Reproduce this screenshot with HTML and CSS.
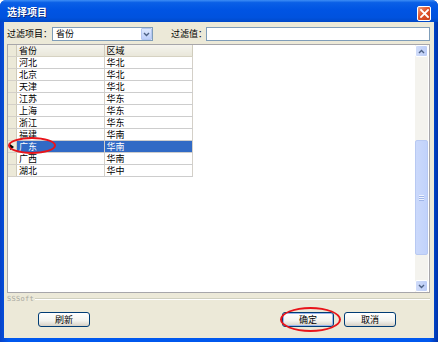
FILE: index.html
```html
<!DOCTYPE html>
<html lang="zh-CN">
<head>
  <meta charset="UTF-8" />
  <title>选择项目</title>
  <link rel="stylesheet" href="styles.css">
</head>
<body>
  <div class="window">
    <div class="titlebar">
      <span class="title">选择项目</span>
      <span class="close-btn">
        <svg width="9" height="9" viewBox="0 0 9 9"><path d="M1 1 L8 8 M8 1 L1 8" stroke="#fff" stroke-width="1.8" stroke-linecap="square"/></svg>
      </span>
    </div>

    <div class="client">
      <div class="filter-row">
        <label class="filter-label">过滤项目：</label>
        <div class="combo">
          <span class="combo-text">省份</span>
          <span class="combo-btn">
            <svg width="7" height="5" viewBox="0 0 7 5"><path d="M1 1 L3.5 3.5 L6 1" fill="none" stroke="#4d6185" stroke-width="1.4"/></svg>
          </span>
        </div>
        <label class="filter-label value-label">过滤值：</label>
        <div class="text-input"></div>
      </div>

      <div class="grid">
        <div class="grid-body">
          <table class="data">
            <thead>
              <tr><th class="rh"></th><th class="c1">省份</th><th class="c2">区域</th></tr>
            </thead>
            <tbody>
              <tr><td class="rh"></td><td>河北</td><td>华北</td></tr>
              <tr><td class="rh"></td><td>北京</td><td>华北</td></tr>
              <tr><td class="rh"></td><td>天津</td><td>华北</td></tr>
              <tr><td class="rh"></td><td>江苏</td><td>华东</td></tr>
              <tr><td class="rh"></td><td>上海</td><td>华东</td></tr>
              <tr><td class="rh"></td><td>浙江</td><td>华东</td></tr>
              <tr><td class="rh"></td><td>福建</td><td>华南</td></tr>
              <tr class="selected"><td class="rh"><span class="arrow"></span></td><td>广东</td><td>华南</td></tr>
              <tr><td class="rh"></td><td>广西</td><td>华南</td></tr>
              <tr><td class="rh"></td><td>湖北</td><td>华中</td></tr>
            </tbody>
          </table>
          <span class="mark mark-row"></span>
        </div>
        <div class="scrollbar">
          <span class="sb-btn">
            <svg width="7" height="5" viewBox="0 0 7 5"><path d="M1 4 L3.5 1.5 L6 4" fill="none" stroke="#4d6185" stroke-width="1.4"/></svg>
          </span>
          <div class="sb-track">
            <div class="sb-thumb"><span class="grip"></span></div>
          </div>
          <span class="sb-btn">
            <svg width="7" height="5" viewBox="0 0 7 5"><path d="M1 1 L3.5 3.5 L6 1" fill="none" stroke="#4d6185" stroke-width="1.4"/></svg>
          </span>
        </div>
      </div>

      <div class="group-line">
        <span class="group-title">SSSoft</span>
        <span class="rule"></span>
      </div>

      <div class="buttons">
        <button class="btn">刷新</button>
        <div class="right-buttons">
          <button class="btn ok">确定<span class="mark mark-ok"></span></button>
          <button class="btn">取消</button>
        </div>
      </div>
    </div>
  </div>
</body>
</html>
```

FILE: styles.css
```css
body {
  margin: 0;
  padding: 0;
  background: #fff;
  font-family: "Noto Sans CJK SC", "Liberation Sans", sans-serif;
}

.window {
  width: 438px;
  height: 342px;
  box-sizing: border-box;
  display: flex;
  flex-direction: column;
  background: linear-gradient(90deg, #0843c8, #0058ee 2%, #0058ee 98%, #0032a8);
  border-radius: 6px 6px 0 0;
  overflow: hidden;
}

.titlebar {
  height: 22px;
  display: flex;
  align-items: center;
  justify-content: space-between;
  padding: 0 7px 0 7px;
  background: linear-gradient(#3d8df5 0%, #0a5fe6 12%, #0054e3 45%, #0052de 80%, #0048c8 100%);
  flex: none;
}

.title {
  color: #fff;
  font-size: 10px;
  font-weight: bold;
  line-height: 1;
  padding-top: 2px;
  text-shadow: 1px 1px 0 #0a2a80;
}

.close-btn {
  width: 14px;
  height: 15px;
  margin-top: 4px;
  box-sizing: border-box;
  border: 1px solid #fff;
  border-radius: 2px;
  background: linear-gradient(135deg, #f0a080, #e0522a 45%, #c8401c);
  display: flex;
  align-items: center;
  justify-content: center;
}

.client {
  flex: 1;
  margin: 0 4px 4px 4px;
  background: #ece9d8;
  display: flex;
  flex-direction: column;
  padding: 5px 4px 0 3px;
  font-size: 9px;
  color: #000;
}

.filter-row {
  display: flex;
  align-items: center;
  height: 14px;
}

.filter-label {
  line-height: 14px;
  white-space: nowrap;
  width: 45px;
}

.value-label {
  margin-left: 18px;
  width: 35px;
}

.combo {
  width: 101px;
  height: 14px;
  box-sizing: border-box;
  border: 1px solid #7f9db9;
  background: #fff;
  display: flex;
  align-items: center;
  justify-content: space-between;
}

.combo-text {
  padding-left: 3px;
  line-height: 12px;
}

.combo-btn {
  width: 11px;
  height: 12px;
  box-sizing: border-box;
  background: linear-gradient(#dde8fd, #bccefa);
  border: 1px solid #b5c7f0;
  border-radius: 1px;
  display: flex;
  align-items: center;
  justify-content: center;
}

.text-input {
  flex: 1;
  height: 14px;
  box-sizing: border-box;
  border: 1px solid #7f9db9;
  background: #fff;
}

.grid {
  margin-top: 3px;
  height: 249px;
  box-sizing: border-box;
  border: 1px solid #a7a6aa;
  background: #fff;
  display: flex;
}

.grid-body {
  flex: 1;
  position: relative;
}

.data {
  border-collapse: collapse;
  table-layout: fixed;
  width: 185px;
  font-size: 9px;
}

.data th,
.data td {
  height: 11px;
  padding: 0 0 0 2px;
  border: 1px solid #d4d0c8;
  border-top: none;
  text-align: left;
  font-weight: normal;
  line-height: 11px;
  white-space: nowrap;
  overflow: hidden;
}

.data th {
  background: linear-gradient(#f5f4ee, #e9e7da);
  border-bottom: 1px solid #d6d2c2;
  border-right: 1px solid #d0ccbc;
}

.data .rh {
  width: 8px;
  padding: 0;
  background: #ece9d8;
  border-left: none;
  border-right: 1px solid #cfcbba;
  border-bottom: 1px solid #d4d0c8;
  position: relative;
}

.data .c1 {
  width: 84px;
}

.data .c2 {
  width: 85px;
}

.data tbody td {
  border-bottom: 1px solid #cdcdcd;
}

.selected td {
  background: #316ac5;
  color: #fff;
}

.selected td.rh {
  background: #ece9d8;
}

.arrow {
  position: absolute;
  left: 2px;
  top: 3px;
  width: 0;
  height: 0;
  border-top: 3px solid transparent;
  border-bottom: 3px solid transparent;
  border-left: 4px solid #000;
}

.mark {
  position: absolute;
  border: 2px solid #e8141a;
  border-radius: 50%;
  box-sizing: border-box;
  pointer-events: none;
}

.mark-row {
  left: 0px;
  top: 92px;
  width: 48px;
  height: 17px;
}

.scrollbar {
  width: 13px;
  display: flex;
  flex-direction: column;
  background: #f4f3ee;
  flex: none;
  margin-right: 1px;
}

.sb-btn {
  height: 12px;
  box-sizing: border-box;
  border: 1px solid #fff;
  background: linear-gradient(90deg, #d0dcf9, #bccdf7);
  border-radius: 2px;
  display: flex;
  align-items: center;
  justify-content: center;
  flex: none;
}

.sb-track {
  flex: 1;
  padding: 83px 0 25px 0;
  display: flex;
}

.sb-thumb {
  flex: 1;
  box-sizing: border-box;
  border: 1px solid #b8c9f2;
  border-radius: 2px;
  background: linear-gradient(90deg, #cbd9fb, #c1d2fb);
  display: flex;
  align-items: center;
  justify-content: center;
}

.grip {
  width: 5px;
  height: 6px;
  background: repeating-linear-gradient(#eef3fe 0 1px, #9fb5e8 1px 2px);
}

.group-line {
  display: flex;
  align-items: center;
  height: 10px;
  margin-top: 1px;
}

.group-title {
  font-family: "DejaVu Sans Mono", monospace;
  font-size: 7px;
  color: #a8a8a0;
  letter-spacing: 0.3px;
}

.rule {
  flex: 1;
  height: 0;
  border-top: 1px solid #d0d0bf;
  border-bottom: 1px solid #fff;
  margin-left: 1px;
}

.buttons {
  display: flex;
  justify-content: space-between;
  align-items: center;
  margin-top: 8px;
  padding: 0 34px 0 31px;
}

.right-buttons {
  display: flex;
  gap: 10px;
}

.btn {
  width: 52px;
  height: 15px;
  padding: 0;
  box-sizing: border-box;
  border: 1px solid #003c74;
  border-radius: 3px;
  background: linear-gradient(#ffffff, #f3f3ee 60%, #d6d0c5);
  font-family: "Noto Sans CJK SC", sans-serif;
  font-size: 9px;
  line-height: 13px;
  color: #000;
  position: relative;
}

.ok {
  border-color: #003c74;
  box-shadow: inset 0 0 0 1px #9ab6ee;
}

.mark-ok {
  left: -3px;
  top: -6px;
  width: 61px;
  height: 25px;
}
```
